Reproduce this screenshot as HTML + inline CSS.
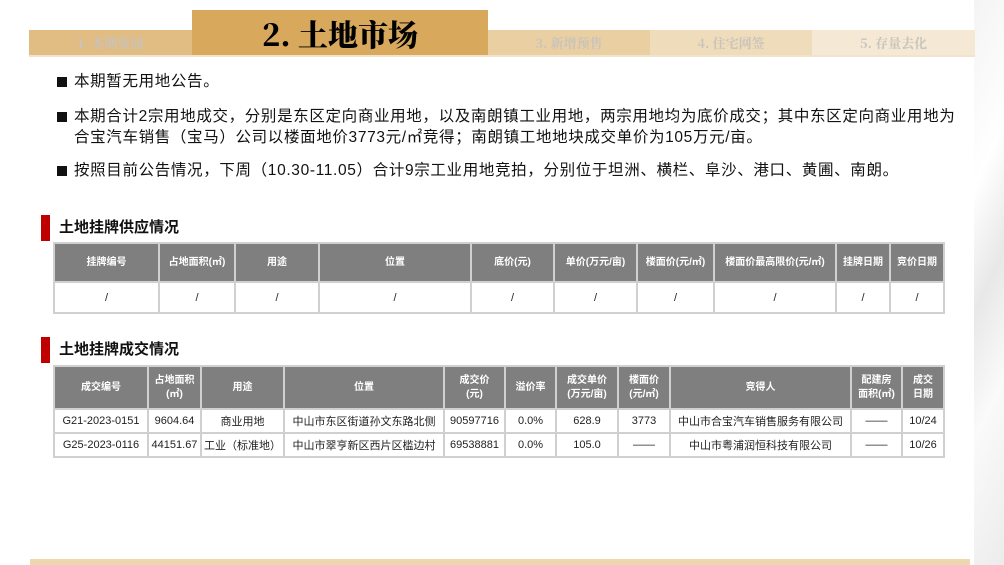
<!DOCTYPE html>
<html><head><meta charset="utf-8"><style>
*{margin:0;padding:0;box-sizing:border-box}
body{width:1004px;height:565px;position:relative;overflow:hidden;background:#fff;font-family:"Liberation Sans","Noto Sans CJK SC",sans-serif;color:#111}
.tab{position:absolute;top:30px;height:26px;font-family:"Noto Serif CJK SC",serif;font-weight:bold;color:#c8c3bc;font-size:13px;text-align:center;line-height:26px}
.tab2{position:absolute;left:192px;top:10px;width:296px;height:46px;background:#d8a85d;font-family:"Noto Serif CJK SC",serif;font-weight:900;font-size:30px;text-align:center;line-height:46px;color:#000}
.p{position:absolute;left:57px;font-size:15.5px;line-height:21px;width:920px;white-space:nowrap;letter-spacing:0.65px}
.p b{position:absolute;left:0;top:6px;width:10px;height:10px;background:#111}
.p span{display:block;padding-left:17px}
.h{position:absolute;left:41px;height:26px;border-left:9px solid #c00000;padding-left:9px;font-size:15px;font-weight:bold;line-height:26px}
table{position:absolute;border-collapse:collapse;font-size:11px;table-layout:fixed}
td,th{border:2px solid #d0d0d0;text-align:center;overflow:hidden;white-space:nowrap}
th{background:#7f7f7f;color:#fff;font-weight:bold;font-size:10px;line-height:14px}
td{background:#fff;color:#222}
</style></head><body>
<div style="position:absolute;right:0;top:0;width:30px;height:565px;background:linear-gradient(115deg,#f4f4f4,#fff 30%,#e8e8e8 50%,#fafafa 70%,#ececec)"></div>
<div class="tab" style="left:29px;width:163px;background:#e1bc83">1. 本期要闻</div>
<div class="tab2">2. 土地市场</div>
<div class="tab" style="left:488px;width:162px;background:#e9cfa1">3. 新增预售</div>
<div class="tab" style="left:650px;width:162px;background:#efdcba">4. 住宅网签</div>
<div class="tab" style="left:812px;width:163px;background:#f5e8d5">5. 存量去化</div>
<div style="position:absolute;left:29px;top:55px;width:946px;height:2px;background:#f1e3cc"></div>

<div class="p" style="top:71px"><b></b><span>本期暂无用地公告。</span></div>
<div class="p" style="top:106px"><b></b><span>本期合计2宗用地成交，分别是东区定向商业用地，以及南朗镇工业用地，两宗用地均为底价成交；其中东区定向商业用地为<br>合宝汽车销售（宝马）公司以楼面地价3773元/㎡竞得；南朗镇工地地块成交单价为105万元/亩。</span></div>
<div class="p" style="top:160px"><b></b><span>按照目前公告情况，下周（10.30-11.05）合计9宗工业用地竞拍，分别位于坦洲、横栏、阜沙、港口、黄圃、南朗。</span></div>

<div class="h" style="top:215px">土地挂牌供应情况</div>
<table style="left:53px;top:242px;width:890px">
<colgroup><col style="width:105px"><col style="width:76px"><col style="width:84px"><col style="width:152px"><col style="width:83px"><col style="width:83px"><col style="width:77px"><col style="width:122px"><col style="width:54px"><col style="width:54px"></colgroup>
<tr style="height:39px"><th>挂牌编号</th><th>占地面积(㎡)</th><th>用途</th><th>位置</th><th>底价(元)</th><th>单价(万元/亩)</th><th>楼面价(元/㎡)</th><th>楼面价最高限价(元/㎡)</th><th>挂牌日期</th><th>竞价日期</th></tr>
<tr style="height:31px"><td>/</td><td>/</td><td>/</td><td>/</td><td>/</td><td>/</td><td>/</td><td>/</td><td>/</td><td>/</td></tr>
</table>

<div class="h" style="top:337px">土地挂牌成交情况</div>
<table style="left:53px;top:365px;width:890px">
<colgroup><col style="width:94px"><col style="width:53px"><col style="width:83px"><col style="width:160px"><col style="width:61px"><col style="width:51px"><col style="width:62px"><col style="width:52px"><col style="width:181px"><col style="width:51px"><col style="width:42px"></colgroup>
<tr style="height:43px"><th>成交编号</th><th>占地面积<br>(㎡)</th><th>用途</th><th>位置</th><th>成交价<br>(元)</th><th>溢价率</th><th>成交单价<br>(万元/亩)</th><th>楼面价<br>(元/㎡)</th><th>竞得人</th><th>配建房<br>面积(㎡)</th><th>成交<br>日期</th></tr>
<tr style="height:24px"><td>G21-2023-0151</td><td>9604.64</td><td>商业用地</td><td>中山市东区街道孙文东路北侧</td><td>90597716</td><td>0.0%</td><td>628.9</td><td>3773</td><td>中山市合宝汽车销售服务有限公司</td><td>——</td><td>10/24</td></tr>
<tr style="height:24px"><td>G25-2023-0116</td><td>44151.67</td><td>工业（标准地）</td><td>中山市翠亨新区西片区槛边村</td><td>69538881</td><td>0.0%</td><td>105.0</td><td>——</td><td>中山市粤浦润恒科技有限公司</td><td>——</td><td>10/26</td></tr>
</table>
<div style="position:absolute;left:30px;top:559px;width:940px;height:6px;background:#ecd7b1"></div>
</body></html>
